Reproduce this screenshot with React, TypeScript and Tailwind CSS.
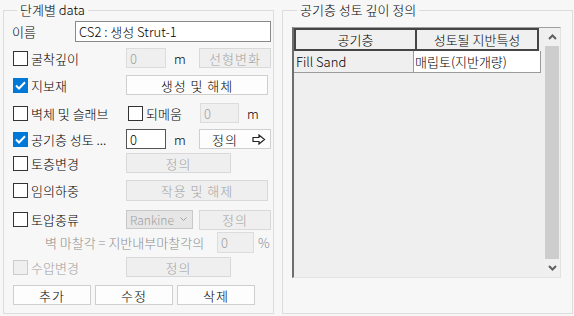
import React from "react";

const FONT = "font-['Noto_Sans_CJK_KR','Noto_Sans',sans-serif]";

function Check({ checked = false, disabled = false }: { checked?: boolean; disabled?: boolean }) {
  if (checked) {
    return (
      <span className="grid h-[15px] w-[15px] shrink-0 place-items-center bg-[#0078d7]">
        <svg width="11" height="9" viewBox="0 0 11 9">
          <path d="M1 4.5 L4 7.5 L10 1.2" fill="none" stroke="white" strokeWidth="2" />
        </svg>
      </span>
    );
  }
  return (
    <span
      className={[
        "h-[15px] w-[15px] shrink-0 border",
        disabled ? "border-[#cccccc] bg-[#efefef]" : "border-[#333333] bg-white",
      ].join(" ")}
    />
  );
}

function Btn({
  children,
  w,
  disabled = false,
}: {
  children: React.ReactNode;
  w: string;
  disabled?: boolean;
}) {
  return (
    <div
      className={[
        "flex h-[20px] shrink-0 items-center justify-center border tracking-[1px]",
        w,
        disabled
          ? "border-[#d9d9d9] bg-[#efefef] text-[#a3a3a3]"
          : "border-[#cfcfcf] bg-[#fdfdfd] text-black",
      ].join(" ")}
    >
      {children}
    </div>
  );
}

function Field({ value, w, disabled = false }: { value: string; w: string; disabled?: boolean }) {
  return (
    <div
      className={[
        "flex h-[20px] shrink-0 items-center border pl-[3px]",
        w,
        disabled ? "border-[#dcdcdc] bg-[#efefef] text-[#a0a0a0]" : "border-[#555555] bg-white text-black",
      ].join(" ")}
    >
      {value}
    </div>
  );
}

function LabelCheck({
  label,
  checked = false,
  disabled = false,
  w = "w-[114px]",
}: {
  label: string;
  checked?: boolean;
  disabled?: boolean;
  w?: string;
}) {
  return (
    <div className={["flex shrink-0 items-center gap-[3px] pl-[1px]", w].join(" ")}>
      <Check checked={checked} disabled={disabled} />
      <span className={disabled ? "text-[#a0a0a0]" : "text-black"}>{label}</span>
    </div>
  );
}

function RightArrow() {
  return (
    <svg width="14" height="11" viewBox="0 0 14 11">
      <path d="M1 3.5 H7 V1 L12.5 5.5 L7 10 V7.5 H1 Z" fill="white" stroke="#222" strokeWidth="1.2" />
    </svg>
  );
}

function StageData() {
  return (
    <fieldset className="ml-[3px] h-[313px] w-[271px] min-w-0 shrink-0 border border-[#dcdcdc] pl-[8px] pr-0">
      <legend className="ml-[5px] px-[3px] leading-[18px]">단계별 data</legend>

      <div className="mt-[2px] flex h-[21px] items-center">
        <span className="w-[63px] shrink-0">이름</span>
        <div className="flex h-[21px] w-[196px] shrink-0 items-center border border-[#8a8a8a] bg-white pl-[3px]">
          CS2 : 생성 Strut-1
        </div>
      </div>

      <div className="mt-[6px] flex h-[20px] items-center">
        <LabelCheck label="굴착깊이" />
        <Field value="0" w="w-[40px]" disabled />
        <span className="w-[33px] shrink-0 pl-[8px]">m</span>
        <Btn w="w-[72px]" disabled>
          선형변화
        </Btn>
      </div>

      <div className="mt-[7px] flex h-[20px] items-center">
        <LabelCheck label="지보재" checked />
        <Btn w="w-[142px]">생성 및 해체</Btn>
      </div>

      <div className="mt-[8px] flex h-[20px] items-center">
        <LabelCheck label="벽체 및 슬래브" />
        <LabelCheck label="되메움" w="w-[73px] ml-[1px]" />
        <Field value="0" w="w-[39px]" disabled />
        <span className="pl-[8px]">m</span>
      </div>

      <div className="mt-[6px] flex h-[20px] items-center">
        <LabelCheck label="공기층 성토 ..." checked />
        <Field value="0" w="w-[40px]" />
        <span className="w-[33px] shrink-0 pl-[8px]">m</span>
        <div className="flex h-[20px] w-[72px] shrink-0 items-center justify-between border border-[#cfcfcf] bg-[#fdfdfd] pl-[12px] pr-[4px] tracking-[1px]">
          <span>정의</span>
          <RightArrow />
        </div>
      </div>

      <div className="mt-[4px] flex h-[20px] items-center">
        <LabelCheck label="토층변경" />
        <Btn w="w-[105px]" disabled>
          정의
        </Btn>
      </div>

      <div className="mt-[7px] flex h-[21px] items-center">
        <LabelCheck label="임의하중" />
        <Btn w="w-[142px] h-[21px]" disabled>
          작용 및 해제
        </Btn>
      </div>

      <div className="mt-[9px] flex h-[19px] items-center">
        <LabelCheck label="토압종류" />
        <div className="flex h-[19px] w-[67px] shrink-0 items-center justify-between border border-[#c8c8c8] bg-[#e6e6e6] pl-[3px] pr-[5px] text-[12px] text-[#a0a0a0]">
          <span>Rankine</span>
          <svg width="7" height="5" viewBox="0 0 7 5">
            <path d="M0.5 0.5 L3.5 3.5 L6.5 0.5" fill="none" stroke="#a0a0a0" />
          </svg>
        </div>
        <Btn w="w-[72px] ml-[6px]" disabled>
          정의
        </Btn>
      </div>

      <div className="mt-[3px] flex h-[21px] items-center">
        <span className="w-[205px] shrink-0 pl-[33px] text-[#8c8c8c]">벽 마찰각 = 지반내부마찰각의</span>
        <Field value="0" w="w-[37px] h-[21px]" disabled />
        <span className="pl-[4px] text-[#8c8c8c]">%</span>
      </div>

      <div className="mt-[4px] flex h-[20px] items-center">
        <LabelCheck label="수압변경" disabled />
        <Btn w="w-[105px]" disabled>
          정의
        </Btn>
      </div>

      <div className="mt-[8px] flex h-[20px] items-center gap-[4px] pl-[1px]">
        <Btn w="w-[78px]">추가</Btn>
        <Btn w="w-[78px]">수정</Btn>
        <Btn w="w-[78px]">삭제</Btn>
      </div>
    </fieldset>
  );
}

function FillDepth() {
  return (
    <fieldset className="ml-[8px] h-[313px] w-[291px] min-w-0 shrink-0 border border-[#dcdcdc] pl-[9px]">
      <legend className="ml-[5px] px-[3px] leading-[18px]">공기층 성토 깊이 정의</legend>

      <div className="mt-[8px] flex h-[251px] w-[269px] border-l-2 border-t border-r border-b border-l-[#6e6e6e] border-t-[#a0a0a0] border-r-[#e3e3e3] border-b-[#e3e3e3] bg-[#efefef]">
        <div className="flex w-[249px] flex-col">
          <div className="flex h-[23px]">
            <div className="flex w-[123px] items-center justify-center border-2 border-[#454545] bg-[#f0f0f0]">
              공기층
            </div>
            <div className="-ml-[2px] flex w-[124px] items-center justify-center border-2 border-[#454545] bg-[#f0f0f0]">
              성토될 지반특성
            </div>
          </div>
          <div className="flex h-[22px]">
            <div className="flex w-[120px] items-center border-r border-b border-[#9a9a9a] pl-[2px]">
              Fill Sand
            </div>
            <div className="flex w-[127px] items-center border-b border-r border-[#9a9a9a] bg-white pl-[1px]">
              매립토(지반개량)
            </div>
          </div>
        </div>

        <div className="ml-[1px] flex w-[16px] flex-col bg-[#f0f0f0]">
          <div className="grid h-[18px] place-items-center">
            <svg width="9" height="6" viewBox="0 0 9 6">
              <path d="M1 5 L4.5 1.5 L8 5" fill="none" stroke="#606060" strokeWidth="2" />
            </svg>
          </div>
          <div className="mx-[1px] flex-1 bg-[#cdcdcd]" />
          <div className="grid h-[18px] place-items-center">
            <svg width="9" height="6" viewBox="0 0 9 6">
              <path d="M1 1 L4.5 4.5 L8 1" fill="none" stroke="#606060" strokeWidth="2" />
            </svg>
          </div>
        </div>
      </div>
    </fieldset>
  );
}

export default function App() {
  return (
    <div className={["flex h-[316px] w-[574px] bg-[#f7f7f7] pt-[1px] text-[13px] font-light leading-none text-black", FONT].join(" ")}>
      <StageData />
      <FillDepth />
    </div>
  );
}
